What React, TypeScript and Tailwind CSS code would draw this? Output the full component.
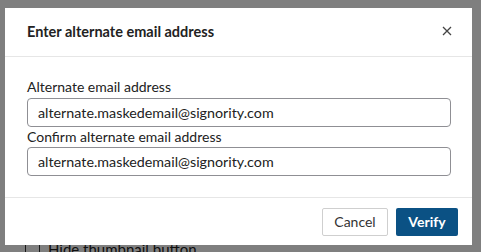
import React from "react";

export default function App() {
  return (
    <div className="relative w-[481px] h-[252px] overflow-hidden bg-white" style={{ fontFamily: "Lato, 'Open Sans', sans-serif" }}>
      {/* background page */}
      <div className="pt-[238px] pl-[25px] flex items-center gap-[8px]">
        <div className="w-[15px] h-[15px] border border-[#333]" />
        <span className="text-[15px] text-[#222]">Hide thumbnail button</span>
      </div>
      {/* overlay */}
      <div className="absolute inset-0 bg-[#000000]/50" />
      {/* modal */}
      <div className="absolute left-[5px] top-[8px] w-[467px] h-[237px] bg-white flex flex-col">
        <div className="h-[49px] flex items-center justify-between pl-[22px] pr-[20px] border-b border-[#e6e6e6]">
          <span className="text-[14.5px] font-bold text-[#222]">Enter alternate email address</span>
          <svg width="10" height="10" viewBox="0 0 10 10" className="mt-[-3px]">
            <path d="M1 1L9 9M9 1L1 9" stroke="#444" strokeWidth="1.3" />
          </svg>
        </div>
        <div className="flex-1 px-[22px] pt-[21px] border-b border-[#e6e6e6]">
          <div className="text-[14px] text-[#222] leading-[17px]">Alternate email address</div>
          <div className="mt-[3px] w-[424px] h-[29px] border border-[#8f8f94] rounded-[4px] flex items-center pl-[10px] text-[14.3px] text-[#222]">
            alternate.maskedemail@signority.com
          </div>
          <div className="mt-[1px] text-[14px] text-[#222] leading-[17px]">Confirm alternate email address</div>
          <div className="mt-[2px] w-[424px] h-[29px] border border-[#8f8f94] rounded-[4px] flex items-center pl-[10px] text-[14.3px] text-[#222]">
            alternate.maskedemail@signority.com
          </div>
        </div>
        <div className="h-[47px] flex items-center justify-end gap-[8px] pr-[14px]">
          <button className="w-[66px] h-[28px] border border-[#cfcfcf] rounded-[2px] bg-white text-[14px] text-[#333]">Cancel</button>
          <button className="w-[62px] h-[28px] rounded-[2px] bg-[#0b5184] text-[14px] font-bold text-white">Verify</button>
        </div>
      </div>
    </div>
  );
}
